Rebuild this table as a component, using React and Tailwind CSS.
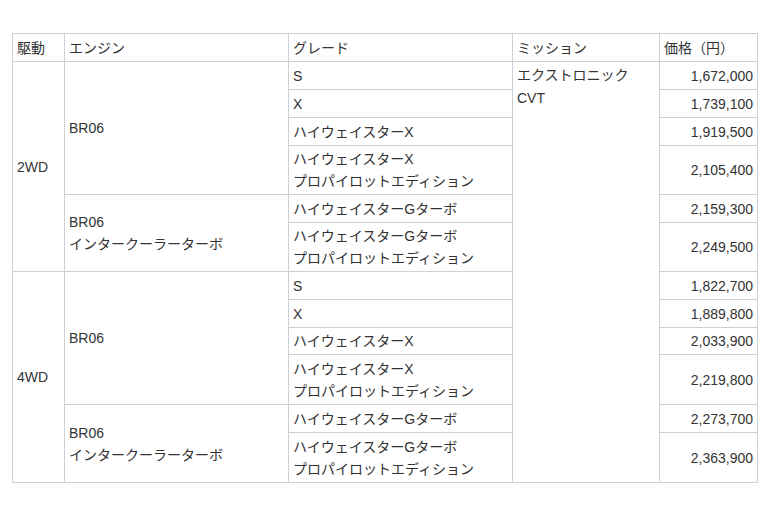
export default function App() {
  const td = "border border-[#cdd0d5] px-[4px] py-0 align-middle";
  const rows2wd = [
    { grade: ["S"], price: "1,672,000", h: "h-[28px]" },
    { grade: ["X"], price: "1,739,100", h: "h-[28px]" },
    { grade: ["ハイウェイスターX"], price: "1,919,500", h: "h-[28px]" },
    { grade: ["ハイウェイスターX", "プロパイロットエディション"], price: "2,105,400", h: "h-[49px]" },
    { grade: ["ハイウェイスターGターボ"], price: "2,159,300", h: "h-[28px]" },
    { grade: ["ハイウェイスターGターボ", "プロパイロットエディション"], price: "2,249,500", h: "h-[49px]" },
  ];
  const rows4wd = [
    { grade: ["S"], price: "1,822,700", h: "h-[28px]" },
    { grade: ["X"], price: "1,889,800", h: "h-[28px]" },
    { grade: ["ハイウェイスターX"], price: "2,033,900", h: "h-[27px]" },
    { grade: ["ハイウェイスターX", "プロパイロットエディション"], price: "2,219,800", h: "h-[50px]" },
    { grade: ["ハイウェイスターGターボ"], price: "2,273,700", h: "h-[28px]" },
    { grade: ["ハイウェイスターGターボ", "プロパイロットエディション"], price: "2,363,900", h: "h-[50px]" },
  ];
  const renderGroup = (label, rows, withMission) =>
    rows.map((r, i) => (
      <tr key={label + i} className={r.h}>
        {i === 0 && (
          <td rowSpan={6} className={td}>
            {label}
          </td>
        )}
        {i === 0 && (
          <td rowSpan={4} className={td}>
            BR06
          </td>
        )}
        {i === 4 && (
          <td rowSpan={2} className={td}>
            BR06
            <br />
            インタークーラーターボ
          </td>
        )}
        <td className={td}>
          {r.grade.map((g, j) => (
            <div key={j}>{g}</div>
          ))}
        </td>
        {withMission && i === 0 && (
          <td rowSpan={12} className={"border border-[#cdd0d5] px-[4px] pt-[2px] align-top leading-[23px]"}>
            エクストロニック
            <br />
            CVT
          </td>
        )}
        <td className={td + " text-right"}>{r.price}</td>
      </tr>
    ));
  return (
    <div className="w-[772px] h-[515px] bg-white pt-[33px] pl-[12px]">
      <table
        className="border-collapse table-fixed w-[745px] text-[14px] leading-[22px] text-[#333333]"
        style={{ fontFamily: '"Liberation Sans", "Noto Sans CJK JP", sans-serif' }}
      >
        <colgroup>
          <col className="w-[52px]" />
          <col className="w-[224px]" />
          <col className="w-[224px]" />
          <col className="w-[147px]" />
          <col className="w-[98px]" />
        </colgroup>
        <tbody>
          <tr className="h-[28px]">
            <td className={td}>駆動</td>
            <td className={td}>エンジン</td>
            <td className={td}>グレード</td>
            <td className={td}>ミッション</td>
            <td className={td}>価格（円）</td>
          </tr>
          {renderGroup("2WD", rows2wd, true)}
          {renderGroup("4WD", rows4wd, false)}
        </tbody>
      </table>
    </div>
  );
}
